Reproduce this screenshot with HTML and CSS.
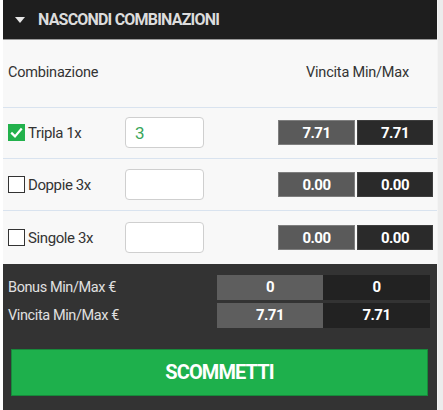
FILE: index.html
```html
<!DOCTYPE html>
<html lang="it">
<head>
<meta charset="utf-8">
<title>Combinazioni</title>
<link rel="stylesheet" href="styles.css">
</head>
<body>
<div class="page">
  <div class="panel">
    <div class="header">
      <span class="caret"></span>
      <span class="header-title">NASCONDI COMBINAZIONI</span>
    </div>
    <div class="col-head">
      <span>Combinazione</span>
      <span class="col-head-right">Vincita Min/Max</span>
    </div>
    <div class="row">
      <label class="combo">
        <span class="check checked">
          <svg viewBox="0 0 16 16" width="16" height="16"><path d="M3.2 8.4 L6.4 11.6 L12.8 4.2" fill="none" stroke="#fff" stroke-width="2.4" stroke-linecap="square"/></svg>
        </span>
        <span class="combo-name">Tripla 1x</span>
      </label>
      <div class="amount"><span class="amount-val">3</span></div>
      <div class="vals">
        <span class="val val-min">7.71</span>
        <span class="val val-max">7.71</span>
      </div>
    </div>
    <div class="row">
      <label class="combo">
        <span class="check"></span>
        <span class="combo-name">Doppie 3x</span>
      </label>
      <div class="amount"></div>
      <div class="vals">
        <span class="val val-min">0.00</span>
        <span class="val val-max">0.00</span>
      </div>
    </div>
    <div class="row row-last">
      <label class="combo">
        <span class="check"></span>
        <span class="combo-name">Singole 3x</span>
      </label>
      <div class="amount"></div>
      <div class="vals">
        <span class="val val-min">0.00</span>
        <span class="val val-max">0.00</span>
      </div>
    </div>
    <div class="footer">
      <div class="totals">
        <span class="tot-label">Bonus Min/Max €</span>
        <span class="tot tot-min">0</span>
        <span class="tot tot-max">0</span>
        <span class="tot-label">Vincita Min/Max €</span>
        <span class="tot tot-min">7.71</span>
        <span class="tot tot-max">7.71</span>
      </div>
      <button class="bet">SCOMMETTI</button>
    </div>
  </div>
  <div class="scrollstrip"></div>
</div>
</body>
</html>
```
FILE: styles.css
```css
* { box-sizing: border-box; }
html, body { margin: 0; padding: 0; }
body {
  background: #ffffff;
  font-family: Roboto, "Liberation Sans", Arial, sans-serif;
  color: #333;
}
.page {
  display: flex;
  width: 443px;
  height: 410px;
  overflow: hidden;
}
.panel {
  margin-left: 3px;
  width: 434px;
  height: 410px;
  background: #f8f8f8;
  display: flex;
  flex-direction: column;
}
.scrollstrip {
  flex: 1;
  background: #ececec;
  border-left: 1px solid #f4f4f4;
}
.header {
  height: 40px;
  background: #1e1e1e;
  border-bottom: 1px solid #9a9a9a;
  display: flex;
  align-items: center;
  padding-left: 12px;
}
.caret {
  width: 0;
  height: 0;
  border-left: 5.5px solid transparent;
  border-right: 5.5px solid transparent;
  border-top: 6px solid #e6e6e6;
  margin-right: 13px;
  margin-top: 1px;
}
.header-title {
  color: #dcdcdc;
  font-weight: 700;
  font-size: 16px;
  letter-spacing: -0.8px;
}
.col-head {
  height: 68px;
  display: flex;
  align-items: center;
  justify-content: space-between;
  padding: 0 28px 2px 5px;
  font-size: 14.5px;
  letter-spacing: -0.2px;
  color: #333;
  border-bottom: 1px solid #d9e3ef;
}
.row {
  height: 52px;
  display: flex;
  align-items: center;
  padding: 0 4px 0 5px;
  border-bottom: 1px solid #d9e3ef;
}
.row-last {
  height: 53px;
  border-bottom: none;
}
.combo {
  width: 117px;
  display: flex;
  align-items: center;
  gap: 3px;
}
.check {
  width: 17px;
  height: 17px;
  border: 1.5px solid #333;
  background: #fff;
  display: flex;
  align-items: center;
  justify-content: center;
}
.check.checked {
  background: #22b14c;
  border-color: #22b14c;
}
.combo-name {
  font-size: 15px;
  letter-spacing: -0.4px;
  color: #333;
}
.amount {
  width: 79px;
  height: 31px;
  background: #fff;
  border: 1px solid #cfcfcf;
  border-radius: 4px;
  display: flex;
  align-items: center;
  padding-left: 9px;
}
.amount-val {
  color: #3aa65a;
  font-size: 17px;
}
.vals {
  margin-left: auto;
  display: flex;
  gap: 2px;
}
.val {
  height: 25px;
  display: flex;
  align-items: center;
  justify-content: center;
  color: #fff;
  font-weight: 700;
  font-size: 15px;
  letter-spacing: -0.5px;
}
.val-min {
  width: 77px;
  background: #5a5a5a;
  border: 1px solid #7e7e7e;
}
.val-max {
  width: 76px;
  background: #2a2a2a;
  border: 1px solid #3e3e3e;
}
.footer {
  flex: 1;
  background: #333333;
  padding: 11px 7px 14px 8px;
  display: flex;
  flex-direction: column;
}
.totals {
  display: grid;
  grid-template-columns: 1fr 106px 107px;
  row-gap: 3px;
}
.tot-label {
  height: 25px;
  display: flex;
  align-items: center;
  color: #e0e0e0;
  font-size: 14.5px;
  letter-spacing: -0.4px;
  margin-left: -3px;
}
.tot {
  height: 25px;
  display: flex;
  align-items: center;
  justify-content: center;
  color: #fff;
  font-weight: 700;
  font-size: 15px;
  letter-spacing: -0.5px;
}
.tot-min { background: #5e5e5e; }
.tot-max { background: #222222; }
.bet {
  margin-top: 21px;
  margin-right: 2px;
  height: 47px;
  background: #1eb04c;
  border: 1px solid #178a3b;
  color: #fff;
  font-family: Roboto, "Liberation Sans", Arial, sans-serif;
  font-weight: 700;
  font-size: 20px;
  letter-spacing: -0.9px;
  padding: 0;
  cursor: pointer;
}
```
